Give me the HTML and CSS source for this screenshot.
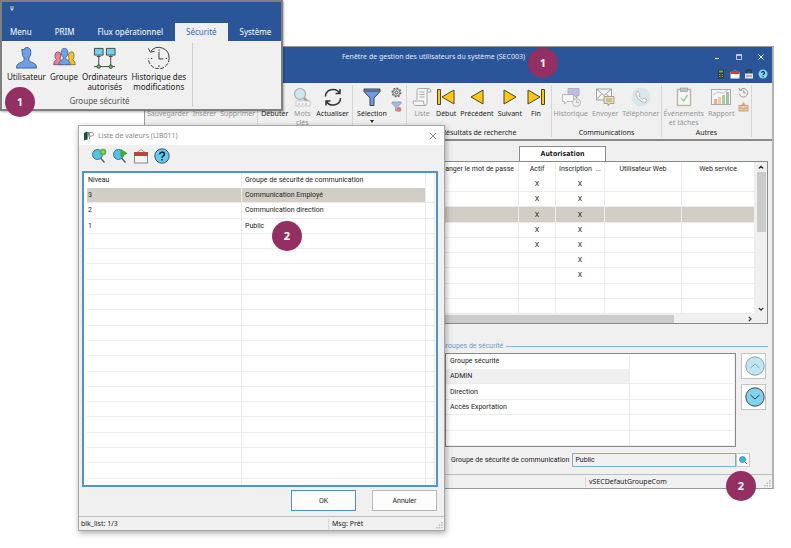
FILE: index.html
```html
<!DOCTYPE html>
<html lang="fr">
<head>
  <meta charset="UTF-8">
  <meta name="viewport" content="width=device-width, initial-scale=1.0">
  <title>Gestion des utilisateurs</title>
  <link rel="stylesheet" href="styles.css">
</head>
<body>
<div class="desktop">

  <!-- main window -->
  <section class="window main-window">
    <header class="main-title">
      <div class="title-row">
        <h1>Fenêtre de gestion des utilisateurs du système (SEC003)</h1>
        <button class="win-btn" aria-label="Réduire"><svg width="8" height="8" viewBox="0 0 8 8"><path d="M2 5.5h4" stroke="#fff"/></svg></button>
        <button class="win-btn" aria-label="Agrandir"><svg width="8" height="8" viewBox="0 0 8 8"><path d="M1.5 1.5h5v5h-5zM1.5 2.5h5" stroke="#dfe7f3" stroke-width=".8" fill="none"/></svg></button>
        <button class="win-btn" aria-label="Fermer"><svg width="8" height="8" viewBox="0 0 8 8"><path d="M1.5 1.5l5 5M6.500 1.500l-5 5" stroke="#fff"/></svg></button>
      </div>
      <div class="quick-row">
        <button class="quick" aria-label="Calculatrice"><svg width="10" height="10" viewBox="0 0 10 10"><rect x="2" y=".5" width="6" height="9" fill="#333b36"/><rect x="3" y="1.500" width="4" height="2" fill="#69b34c"/><path d="M3 5.500h4M3 7.500h4" stroke="#8b9690" stroke-dasharray="1 .5"/></svg></button>
        <button class="quick" aria-label="Calendrier"><svg width="10" height="10" viewBox="0 0 10 10"><path d="M2 3l3-2 3 2" stroke="#999" fill="none" stroke-width=".6"/><rect x=".5" y="3" width="9" height="6.500" fill="#fff"/><rect x=".5" y="2.500" width="9" height="2.500" fill="#c8453b"/></svg></button>
        <button class="quick" aria-label="Verrouiller"><svg width="10" height="10" viewBox="0 0 10 10"><path d="M2.500 5V3a2.500 2.200 0 0 1 5 0v2" stroke="#333" fill="none" stroke-width="1.200"/><rect x="1" y="4.500" width="8" height="5" fill="#e8e8e8"/><path d="M2 7h6" stroke="#777"/></svg></button>
        <button class="quick" aria-label="Aide"><svg width="10" height="10" viewBox="0 0 10 10"><circle cx="5" cy="5" r="4.500" fill="#7fd6f2"/><path d="M3.500 3.800a1.500 1.300 0 1 1 2.300 1.200q-.8.500-.8 1M5 7.200v1" stroke="#123" stroke-width="1.200" fill="none"/></svg></button>
      </div>
    </header>

    <div class="ribbon">
      <div class="group group-edit">
        <div class="tools">
          <button class="tool" disabled><span class="icon"></span>Sauvegarder</button>
          <button class="tool" disabled><span class="icon"></span>Insérer</button>
          <button class="tool" disabled><span class="icon"></span>Supprimer</button>
        </div>
      </div>
      <div class="group group-query">
        <div class="tools">
          <button class="tool"><span class="icon"></span>Débuter</button>
          <button class="tool" disabled>
            <svg class="icon" viewBox="0 0 20 20"><circle cx="8" cy="7" r="5.500" fill="#a6e0f2" stroke="#555" stroke-width="1.200"/><path d="M12 11l4 4" stroke="#444" stroke-width="2.500"/><rect x="4" y="14" width="14" height="5" fill="#fff" stroke="#777" stroke-width=".7"/><path d="M6 17h2M9.500 17h2M13 17h2" stroke="#555"/></svg>
            Mots<br>clés</button>
          <button class="tool">
            <svg class="icon" viewBox="0 0 20 20" fill="none" stroke="#333" stroke-width="1.500"><path d="M2.500 9.500a7.500 7 0 0 1 14-3.500M17.500 11a7.500 7 0 0 1-14 3.500M17 2v4.500h-4.500M3 18.500V14h4.500"/></svg>
            Actualiser</button>
        </div>
      </div>
      <div class="group group-select">
        <div class="tools">
          <button class="tool">
            <svg class="icon" viewBox="0 0 20 20"><path d="M2 2h16v2.500l-6 6.500v7.500h-4V11L2 4.500z" fill="#6b9be8" stroke="#444"/><path d="M2 4h16" stroke="#444"/></svg>
            Sélection<svg class="arrow" width="4" height="3" viewBox="0 0 4 3"><path d="M0 0h4L2 3z" fill="#222"/></svg></button>
          <div class="mini">
            <button class="quick" aria-label="Options"><svg width="11" height="11" viewBox="0 0 11 11" fill="none"><circle cx="5.500" cy="5.500" r="4.300" stroke="#666" stroke-width="1.400" stroke-dasharray="1.900 1.400"/><circle cx="5.500" cy="5.500" r="3.400" fill="#d9e0e6" stroke="#666" stroke-width=".8"/><circle cx="5.500" cy="5.500" r="1.400" fill="#fff" stroke="#555"/></svg></button>
            <button class="quick faded" aria-label="Retirer le filtre"><svg width="11" height="11" viewBox="0 0 11 11"><path d="M1 1h9v1.500L6.500 6v4h-2V6L1 2.500z" fill="#6b9be8" stroke="#555" stroke-width=".8"/><circle cx="8" cy="8.500" r="2.400" fill="#d6362b"/></svg></button>
          </div>
        </div>
      </div>
      <div class="group group-results">
        <div class="tools">
          <button class="tool" disabled>
            <svg class="icon" viewBox="0 0 20 20" fill="#fff" stroke="#555"><path d="M5 13V3.500Q5 1.500 7 1.500h10.500Q19 2 19 5h-4v11q0 2.500-2 2.500H3Q1 18 1 14h10.500q0 4 1.500 4.500"/><path d="M15 5q0-3.500 2-3.500M7.500 5h5M7.500 7.500h5M7.500 10h5" fill="none"/></svg>
            Liste</button>
          <button class="tool">
            <svg class="icon" viewBox="0 0 20 20" fill="#ffc90e" stroke="#4a4434"><path d="M1.500 2.500h3v15h-3zM18 3v14L6 10z"/></svg>
            Début</button>
          <button class="tool">
            <svg class="icon" viewBox="0 0 20 20" fill="#ffc90e" stroke="#4a4434"><path d="M16 3v14L4 10z"/></svg>
            Précédent</button>
          <button class="tool">
            <svg class="icon" viewBox="0 0 20 20" fill="#ffc90e" stroke="#4a4434"><path d="M4 3v14l12-7z"/></svg>
            Suivant</button>
          <button class="tool">
            <svg class="icon" viewBox="0 0 20 20" fill="#ffc90e" stroke="#4a4434"><path d="M15.500 2.500h3v15h-3zM2 3v14l12-7z"/></svg>
            Fin</button>
        </div>
        <h2>Résultats de recherche</h2>
      </div>
      <div class="group group-comm">
        <div class="tools">
          <button class="tool" disabled>
            <svg class="icon" viewBox="0 0 20 20" stroke="#555" stroke-width=".8"><path d="M7 1.500h11v7h-2v2.500l-3-2.500H7z" fill="#8b7bea"/><path d="M1.500 7.500h11v7H6L3.500 17v-2.500h-2z" fill="#fff"/><circle cx="15.500" cy="15.500" r="4" fill="#eee"/><path d="M15.500 13v2.500h2.500" fill="none"/></svg>
            Historique</button>
          <button class="tool" disabled>
            <svg class="icon" viewBox="0 0 20 20" stroke="#333" stroke-width=".9"><path d="M1.500 2h15v11h-15zl7.500 6.500L16.500 2M1.500 13l5-6M16.500 13l-5-6" fill="#fff"/><path d="M9 9.500h10v7h-4L13 19v-2.500H9z" fill="#ffc63d"/><path d="M11 12h6M11 14h6"/></svg>
            Envoyer</button>
          <button class="tool" disabled>
            <svg class="icon" viewBox="0 0 20 20"><circle cx="10" cy="10" r="9.500" fill="#c3dbe6"/><path d="M5 5.500l2-1.500 2 3-1 1.500q1 2.500 3.500 3.700L13 11l3 2-1.500 2.500Q11 16 7.500 12T5 5.500z" fill="#fff" stroke="#555" stroke-width=".8"/></svg>
            Téléphoner</button>
        </div>
        <h2>Communications</h2>
      </div>
      <div class="group group-other">
        <div class="tools">
          <button class="tool" disabled>
            <svg class="icon" viewBox="0 0 20 20"><rect x="3.500" y="2.500" width="13" height="16" fill="#fff" stroke="#8a6a4a" stroke-width="1.400"/><rect x="6.500" y="1" width="7" height="3.500" fill="#888" stroke="#444" stroke-width=".7"/><path d="M7 11l2.500 3L13.500 8" stroke="#3fa535" stroke-width="1.400" fill="none"/></svg>
            Événements<br>et tâches</button>
          <button class="tool" disabled>
            <svg class="icon" viewBox="0 0 20 20"><rect x=".5" y="2.500" width="19" height="15" fill="#fff" stroke="#555"/><path d="M3 17v-5h3v5z" fill="#e2574c"/><path d="M7 17v-7h3v7z" fill="#f0a030"/><path d="M11 17V8h3v9z" fill="#58a848"/><path d="M15 17V5h3v12z" fill="#3c8a3c"/><path d="M2 8l5-3 5 1 5-3" stroke="#777" stroke-width=".8" fill="none"/></svg>
            Rapport</button>
          <div class="mini faded">
            <button class="quick" aria-label="Historique" disabled><svg width="11" height="11" viewBox="0 0 11 11" fill="none" stroke="#555" stroke-width=".9"><path d="M1.800 3.500A4.300 4.300 0 1 1 1.300 7M1 1l.8 2.500 2.500-.4M5.800 3v3h2"/></svg></button>
            <button class="quick" aria-label="Documents" disabled><svg width="11" height="11" viewBox="0 0 11 11"><path d="M3 4.500L5.500 1 8 4.500z" fill="#d9653b"/><rect x="1" y="4.500" width="9" height="5.500" fill="#f3b562" stroke="#9a5b2c" stroke-width=".8"/><path d="M1 7h3l.5 1h2L7 7h3" stroke="#9a5b2c" fill="none" stroke-width=".8"/></svg></button>
          </div>
        </div>
        <h2>Autres</h2>
      </div>
    </div>

    <div class="main-body">
      <div class="auth-tab">Autorisation</div>
      <div class="user-grid">
        <table class="grid users">
          <colgroup><col><col class="c-actif"><col class="c-insc"><col class="c-web"><col class="c-serv"></colgroup>
          <thead>
            <tr><th>Changer le mot de passe</th><th>Actif</th><th>Inscription &nbsp;...</th><th>Utilisateur Web</th><th>Web service</th></tr>
          </thead>
          <tbody>
            <tr><td></td><td>X</td><td>X</td><td></td><td></td></tr>
            <tr><td></td><td>X</td><td>X</td><td></td><td></td></tr>
            <tr class="selected"><td></td><td>X</td><td>X</td><td></td><td></td></tr>
            <tr><td></td><td>X</td><td>X</td><td></td><td></td></tr>
            <tr><td></td><td>X</td><td>X</td><td></td><td></td></tr>
            <tr><td></td><td></td><td>X</td><td></td><td></td></tr>
            <tr><td></td><td></td><td>X</td><td></td><td></td></tr>
            <tr><td></td><td></td><td></td><td></td><td></td></tr>
            <tr><td></td><td></td><td></td><td></td><td></td></tr>
          </tbody>
        </table>
        <div class="vscroll">
          <svg width="6" height="10" viewBox="0 0 6 10"><path d="M.8 6.500L3 4.300l2.200 2.200" stroke="#333" stroke-width="1.200" fill="none"/></svg>
          <span class="vthumb"></span>
          <svg width="6" height="10" viewBox="0 0 6 10"><path d="M.8 4L3 6.200 5.200 4" stroke="#333" stroke-width="1.200" fill="none"/></svg>
        </div>
        <div class="hscroll">
          <span class="hthumb"></span>
          <svg width="6" height="6" viewBox="0 0 6 6"><path d="M1.800.8L4 3 1.800 5.200" stroke="#333" stroke-width="1.200" fill="none"/></svg>
        </div>
      </div>

      <div class="security">
        <h3>Groupes de sécurité</h3>
        <div class="security-row">
          <table class="grid groups">
            <colgroup><col><col class="c-extra"></colgroup>
            <thead><tr><th>Groupe sécurité</th><th></th></tr></thead>
            <tbody>
              <tr class="current"><td>ADMIN</td><td></td></tr>
              <tr><td>Direction</td><td></td></tr>
              <tr><td>Accès Exportation</td><td></td></tr>
              <tr><td></td><td></td></tr>
              <tr><td></td><td></td></tr>
            </tbody>
          </table>
          <div class="movers">
            <button class="mover" aria-label="Monter" disabled><svg width="20" height="20" viewBox="0 0 20 20"><circle cx="10" cy="10" r="9.200" fill="#7fd3ee" stroke="#333"/><path d="M5.500 12L10 8l4.500 4" stroke="#333" fill="none"/></svg></button>
            <button class="mover" aria-label="Descendre"><svg width="20" height="20" viewBox="0 0 20 20"><circle cx="10" cy="10" r="9.200" fill="#7fd3ee" stroke="#444"/><path d="M5.500 8l4.500 4 4.500-4" stroke="#333" fill="none"/></svg></button>
          </div>
        </div>
        <div class="com-field">
          <label for="groupe_com">Groupe de sécurité de communication</label>
          <input type="text" id="groupe_com" value="Public">
          <button class="lookup" aria-label="Rechercher"><svg width="10" height="10" viewBox="0 0 10 10"><path d="M6.500 6.500L9 9" stroke="#666"/><circle cx="4.500" cy="4.500" r="3" fill="#3fb4e0" stroke="#2d7fa5" stroke-width=".7"/></svg></button>
        </div>
      </div>
    </div>

    <footer class="status">
      <span class="main-msg">vSECDefautGroupeCom</span>
      <svg class="grip" width="7" height="7" viewBox="0 0 7 7"><path d="M5 0h1.500v1.500H5zM5 2.500h1.500V4H5zM5 5h1.500v1.500H5zM2.500 2.500H4V4H2.500zM2.500 5H4v1.500H2.500zM0 5h1.500v1.500H0z" fill="#bbb"/></svg>
    </footer>
  </section>

  <!-- security ribbon -->
  <section class="window ribbon-window">
    <header class="ribbon-head">
      <svg width="6" height="6" viewBox="0 0 6 6"><path d="M1 1h4" stroke="#dfe7f3" stroke-width=".8"/><path d="M1 2.500h4L3 5z" fill="#dfe7f3"/></svg>
      <nav class="tabs">
        <a href="#">Menu</a>
        <a href="#">PRIM</a>
        <a href="#">Flux opérationnel</a>
        <a href="#" class="active">Sécurité</a>
        <a href="#">Système</a>
      </nav>
    </header>
    <div class="security-group">
      <div class="big-tools">
        <button class="tool">
          <svg class="icon" viewBox="0 0 22 24"><path d="M11 1.500Q15.500 1.500 15.500 6.500 15.800 10 13.500 12.500V15Q14 16 19.500 18.500 21.500 20 21.500 23H.5Q.5 20 2.500 18.500 8 16 8.500 15v-2.500Q6.200 10 6.500 6.500L6 3.500 8.500 4Q9 1.500 11 1.500z" fill="#6f9fe6" stroke="#3f5f92"/></svg>
          Utilisateur</button>
        <button class="tool">
          <svg class="icon" viewBox="0 0 24 24"><path d="M5 6q3 0 3 3.500T7 14q4 1 4 5.500H.7Q.7 15.500 3.500 14.500 2 12 2 9.500T5 6z" fill="#ef7f95" stroke="#7a3c49" stroke-width=".8"/><path d="M19 6q3 0 3 3.500t-1.500 5q2.800 1 2.800 5H13q0-4.500 4-5.500-1-2-1-4.500T19 6z" fill="#f6bf2e" stroke="#7d6320" stroke-width=".8"/><path d="M12 2.500q3.500 0 3.500 4.500 0 3-2 5v2q4.500 1.200 4.500 5.500H6q0-4.300 4.500-5.500v-2q-2-2-2-5Q8.500 2.500 12 2.500z" fill="#6f9fe6" stroke="#3f5f92" stroke-width=".8"/></svg>
          Groupe</button>
        <button class="tool">
          <svg class="icon" viewBox="0 0 24 24" stroke="#444"><path d="M6 10v11M18.500 10v11M1 21.500h22" fill="none"/><path d="M1.500 2.500h9v7h-9zM14 2.500h9v7h-9z" fill="#6fd0f0"/><path d="M4 11h4M16.500 11h4" fill="none"/><circle cx="6" cy="21.500" r="1.800" fill="#6cbf3f"/><circle cx="18.500" cy="21.500" r="1.800" fill="#6cbf3f"/></svg>
          Ordinateurs<br>autorisés</button>
        <button class="tool">
          <svg class="icon" viewBox="0 0 24 24" stroke="#333" fill="none"><path d="M4 5.500A10.700 10.700 0 0 1 23 13"/><path d="M23 13A10.700 10.700 0 0 1 1.500 13" stroke-dasharray="4 1.500"/><path d="M1.500 2.500l2 4 4.500-1M12.500 6v7.500H17M12.500 3.500V5M12.500 20v2M4 13h1.500M19.500 13H21"/></svg>
          Historique des<br>modifications</button>
      </div>
      <h2>Groupe sécurité</h2>
    </div>
  </section>

  <!-- list of values -->
  <section class="window dialog">
    <header class="dialog-title">
      <svg width="10" height="10" viewBox="0 0 10 10"><path d="M0 2l3-1.500v8L0 9.500z" fill="#24483e"/><path d="M3 1h2.500L3.500 9H3z" fill="#5d8f7c"/><path d="M5.500 8V1.500h2q2 0 2 1.800t-2 1.800h-2" stroke="#8a949b" fill="none"/></svg>
      <h1>Liste de valeurs (LIB011)</h1>
      <button class="win-btn" aria-label="Fermer"><svg width="8" height="8" viewBox="0 0 8 8"><path d="M1 1l6 6M7 1L1 7" stroke="#888" stroke-width=".9"/></svg></button>
    </header>
    <div class="dialog-tools">
      <button class="quick" aria-label="Ajouter un critère"><svg width="16" height="16" viewBox="0 0 16 16"><path d="M9.500 10l4 4.500" stroke="#555" stroke-width="1.200"/><circle cx="6.500" cy="6.500" r="5" fill="#4fc3ea" stroke="#3d7288"/><circle cx="12" cy="4" r="3.300" fill="#5cb531"/><path d="M10.500 4h3M12 2.500v3" stroke="#b4e59a" stroke-width=".8"/></svg></button>
      <button class="quick" aria-label="Lancer la recherche"><svg width="16" height="16" viewBox="0 0 16 16"><path d="M9.500 10l4 4.500" stroke="#555" stroke-width="1.200"/><circle cx="6.500" cy="6.500" r="5" fill="#4fc3ea" stroke="#3d7288"/><path d="M9 1.500v7.500l6-3.700z" fill="#4fae25" stroke="#3f8420" stroke-width=".6"/></svg></button>
      <button class="quick" aria-label="Calendrier"><svg width="16" height="16" viewBox="0 0 16 16"><path d="M4 4.500L8 1.500l4 3" stroke="#777" fill="none" stroke-width=".8"/><rect x="1.500" y="4.500" width="13" height="10.500" fill="#f4f4f4" stroke="#8a8a8a"/><rect x="1" y="4" width="14" height="4" fill="#b5483f"/></svg></button>
      <button class="quick" aria-label="Aide"><svg width="16" height="16" viewBox="0 0 16 16"><circle cx="8" cy="8" r="7.200" fill="#5fcdf0" stroke="#3c5560"/><path d="M5.800 6.300a2.300 2 0 1 1 3.500 1.600Q8 8.700 8 9.800M8 11v1.600" stroke="#123" stroke-width="1.600" fill="none"/></svg></button>
    </div>
    <div class="values">
      <table class="grid levels">
        <colgroup><col class="c-level"><col><col class="c-gutter"></colgroup>
        <thead><tr><th>Niveau</th><th>Groupe de sécurité de communication</th><th></th></tr></thead>
        <tbody>
          <tr class="selected"><td>3</td><td>Communication Employé</td><td></td></tr>
          <tr><td>2</td><td>Communication direction</td><td></td></tr>
          <tr><td>1</td><td>Public</td><td></td></tr>
          <tr><td></td><td></td><td></td></tr>
          <tr><td></td><td></td><td></td></tr>
          <tr><td></td><td></td><td></td></tr>
          <tr><td></td><td></td><td></td></tr>
          <tr><td></td><td></td><td></td></tr>
          <tr><td></td><td></td><td></td></tr>
          <tr><td></td><td></td><td></td></tr>
          <tr><td></td><td></td><td></td></tr>
          <tr><td></td><td></td><td></td></tr>
          <tr><td></td><td></td><td></td></tr>
          <tr><td></td><td></td><td></td></tr>
          <tr><td></td><td></td><td></td></tr>
          <tr><td></td><td></td><td></td></tr>
          <tr><td></td><td></td><td></td></tr>
          <tr><td></td><td></td><td></td></tr>
          <tr><td></td><td></td><td></td></tr>
          <tr class="cut"><td></td><td></td><td></td></tr>
        </tbody>
      </table>
    </div>
    <div class="actions">
      <button class="action default">OK</button>
      <button class="action">Annuler</button>
    </div>
    <footer class="status">
      <span class="block-info">blk_list: 1/3</span>
      <span class="block-msg">Msg: Prêt</span>
      <svg class="grip" width="7" height="7" viewBox="0 0 7 7"><path d="M5 0h1.500v1.500H5zM5 2.500h1.500V4H5zM5 5h1.500v1.500H5zM2.500 2.500H4V4H2.500zM2.500 5H4v1.500H2.500zM0 5h1.500v1.500H0z" fill="#bbb"/></svg>
    </footer>
  </section>

  <span class="badge badge-menu">1</span>
  <span class="badge badge-title">1</span>
  <span class="badge badge-list">2</span>
  <span class="badge badge-field">2</span>
</div>
</body>
</html>
```
FILE: styles.css
```css
* {
  box-sizing: border-box;
}
body {
  margin: 0;
  background: #fff;
  color: #222;
  font-family: Roboto, sans-serif;
  font-size: 7px;
  line-height: 10px;
}
h1, h2, h3 {
  margin: 0;
  font-size: inherit;
  font-weight: normal;
}
button {
  border: 0;
  padding: 0;
  background: none;
  color: inherit;
  font: inherit;
}
svg {
  display: block;
  flex: none;
}
.desktop {
  position: relative;
  min-height: 100vh;
  overflow: hidden;
}
.window {
  position: absolute;
  display: flex;
  flex-direction: column;
  background: #f0f0f0;
}

/* main window */
.main-window {
  top: 46px;
  left: 144px;
  right: 17px;
  height: 443px;
  border: 1px solid #9a9a9a;
  border-right: 2px solid #b4b4b4;
}
.main-title {
  height: 36px;
  flex: none;
  background: #2a5699;
  color: #e3eaf5;
}
.title-row {
  display: flex;
  align-items: center;
  height: 20px;
}
.title-row h1 {
  flex: 1;
  padding-left: 16px;
  text-align: center;
  font-family: "Noto Sans", sans-serif;
}
.win-btn {
  display: flex;
  justify-content: center;
  width: 22px;
}
.quick-row {
  display: flex;
  justify-content: flex-end;
  gap: 4px;
  padding: 2px 4px 0 0;
}
.quick {
  display: block;
}
.ribbon {
  display: flex;
  height: 58px;
  flex: none;
  padding: 2px 0 2px;
  border-bottom: 2px solid #8a8a8a;
  font-family: "Noto Sans", sans-serif;
  line-height: 9px;
}
.group {
  display: flex;
  flex-direction: column;
  justify-content: space-between;
  border-right: 1px solid #d6d6d6;
  text-align: center;
}
.group-edit {
  width: 113px;
}
.group-query {
  width: 95px;
}
.group-select {
  width: 54px;
}
.group-results {
  width: 145px;
}
.group-comm {
  width: 110px;
}
.group-other {
  width: 90px;
}
.tools {
  display: flex;
  justify-content: center;
  align-items: flex-start;
  gap: 4px;
  padding-top: 2px;
}
.tool {
  min-width: 20px;
  white-space: nowrap;
}
.tool .icon {
  display: block;
  width: 20px;
  height: 20px;
  margin: 0 auto 2px;
}
.tool:disabled {
  color: #222;
  opacity: 0.45;
}
.arrow {
  margin: 2px auto 0;
}
.mini {
  display: flex;
  flex-direction: column;
  gap: 3px;
}
.faded {
  opacity: 0.6;
}

.main-body {
  flex: 1;
  padding: 5px 4px 0 0;
}
.auth-tab {
  width: 87px;
  height: 15px;
  margin-left: 374px;
  border: 1px solid #8a8a8a;
  border-bottom: 0;
  background: #fff;
  font-family: "DejaVu Sans Condensed", sans-serif;
  font-weight: bold;
  line-height: 14px;
  text-align: center;
}
.user-grid {
  display: grid;
  grid-template-columns: 1fr 12px;
  border: 1px solid #8a8a8a;
  background: #f0f0f0;
}
.grid {
  width: 100%;
  border-collapse: separate;
  border-spacing: 0;
  table-layout: fixed;
  background: #fff;
}
.grid th,
.grid td {
  height: 15px;
  padding: 0;
  border-right: 1px solid #ececec;
  border-bottom: 1px solid #ececec;
  font-weight: normal;
  line-height: 12px;
  text-align: left;
  white-space: nowrap;
}
.grid th {
  border-bottom-color: #fff;
}
.grid .selected td {
  background: #d3cec5;
}
.users {
  height: 152px;
}
.users th,
.users td {
  text-align: center;
}
.users th:first-child {
  padding-right: 4px;
  text-align: right;
}
.c-actif {
  width: 37px;
}
.c-insc {
  width: 49px;
}
.c-web {
  width: 77px;
}
.c-serv {
  width: 73px;
}
.vscroll {
  display: flex;
  flex-direction: column;
  align-items: center;
}
.vthumb {
  width: 9px;
  height: 60px;
  margin-bottom: auto;
  background: #cbcbcb;
}
.hscroll {
  display: flex;
  grid-column: 1 / 3;
  align-items: center;
  justify-content: space-between;
  height: 9px;
  padding-right: 14px;
}
.hthumb {
  width: 87%;
  height: 8px;
  background: #cbcbcb;
}

.security {
  margin: 17px 0 0 296px;
}
.security h3 {
  display: flex;
  align-items: center;
  gap: 3px;
  color: #7299c6;
}
.security h3::after {
  content: "";
  flex: 1;
  height: 1px;
  background: #8fb2d8;
}
.security-row {
  display: flex;
  gap: 5px;
  padding: 2px 2px 0 4px;
}
.groups {
  flex: 1;
  height: 94px;
  border: 1px solid #8a8a8a;
}
.groups th,
.groups td {
  padding-left: 4px;
}
.c-extra {
  width: 105px;
}
.groups .current td:first-child {
  background: #f0f0f0;
}
.movers {
  display: flex;
  flex-direction: column;
  gap: 5px;
}
.mover {
  display: flex;
  align-items: center;
  justify-content: flex-end;
  width: 25px;
  height: 26px;
  border: 1px solid #c4c4c4;
  background: #fff;
}
.mover:disabled svg {
  opacity: 0.5;
}
.com-field {
  display: flex;
  align-items: center;
  padding: 6px 18px 0 10px;
}
.com-field input {
  flex: 1;
  min-width: 0;
  height: 14px;
  margin-left: 3px;
  padding: 0 2px;
  border: 1px solid #7fb0c8;
  background: #f0f0f0;
  color: inherit;
  font: inherit;
}
.lookup {
  padding: 1px;
  border: 1px solid #c8c8c8;
  background: #fff;
}
.status {
  display: flex;
  align-items: center;
  flex: none;
  height: 14px;
  border-top: 1px solid #bdbdbd;
  font-family: "Noto Sans", sans-serif;
  font-size: 7px;
}
.grip {
  margin: auto 1px 1px auto;
}
.main-msg {
  margin-left: 440px;
  padding-left: 3px;
  border-left: 1px solid #d8d8d8;
}

/* security ribbon */
.ribbon-window {
  top: 0;
  left: 0;
  width: 283px;
  height: 111px;
  border: 2px solid #7f7f7f;
  font-family: "Noto Sans", sans-serif;
  font-size: 8px;
  box-shadow: 1px 1px 2px rgba(0, 0, 0, 0.3);
}
.ribbon-head {
  display: flex;
  flex-direction: column;
  justify-content: space-between;
  height: 39px;
  background: #2a5699;
}
.ribbon-head > svg {
  margin: 4px 0 0 7px;
}
.tabs {
  display: flex;
  gap: 1px;
}
.tabs a {
  padding: 0 11px;
  color: #fff;
  line-height: 18px;
  text-decoration: none;
  white-space: nowrap;
}
.tabs a:first-child {
  padding-left: 8px;
}
.tabs .active {
  background: #f0f0f0;
  color: #2a6ab0;
}
.security-group {
  flex: 1;
  width: 191px;
  margin: 2px 0;
  padding: 3px 0 0 5px;
  border-right: 1px solid #d0d0d0;
  text-align: center;
}
.big-tools {
  display: flex;
  align-items: flex-start;
  gap: 4px;
}
.big-tools .icon {
  width: 23px;
  height: 23px;
  margin-bottom: 3px;
}
.security-group h2 {
  margin-top: 4px;
  color: #555;
}

/* list of values */
.dialog {
  top: 125px;
  left: 78px;
  width: 367px;
  height: 406px;
  border: 1px solid #a8a8a8;
  box-shadow: 1px 2px 6px rgba(0, 0, 0, 0.35);
}
.dialog-title {
  display: flex;
  align-items: center;
  gap: 4px;
  height: 19px;
  padding-left: 5px;
  background: #fff;
  color: #888;
}
.dialog-title h1 {
  flex: 1;
  font-family: "Noto Sans", sans-serif;
}
.dialog-tools {
  display: flex;
  gap: 5px;
  padding: 3px 0 7px 12px;
}
.values {
  margin: 0 6px 0 3px;
  padding: 0 1px 0 3px;
  border: 2px solid #4f94cd;
  background: #fff;
}
.levels {
  height: 312px;
}
.levels th,
.levels td {
  padding-left: 3px;
}
.levels td:first-child,
.levels th:first-child {
  padding-left: 1px;
}
.c-level {
  width: 155px;
}
.c-gutter {
  width: 9px;
}
.levels .selected td:last-child {
  background: #fff;
}
.levels .cut td {
  height: 6px;
  border-bottom: 0;
}
.actions {
  display: flex;
  justify-content: flex-end;
  gap: 16px;
  padding: 3px 7px 0 0;
}
.action {
  width: 65px;
  height: 21px;
  border: 1px solid #b8b8b8;
  background: #fdfdfd;
}
.action.default {
  border-color: #4f8fc0;
}
.dialog .status {
  margin-top: auto;
}
.block-info {
  width: 250px;
  padding-left: 2px;
  border-right: 1px solid #d8d8d8;
}
.block-msg {
  padding-left: 3px;
}

/* step markers */
.badge {
  position: absolute;
  width: 30px;
  height: 30px;
  border-radius: 50%;
  background: #932f63;
  color: #fff;
  font-family: "Noto Sans", sans-serif;
  font-size: 11px;
  font-weight: bold;
  line-height: 30px;
  text-align: center;
}
.badge-menu {
  top: 87px;
  left: 5px;
}
.badge-title {
  top: 48px;
  left: 528px;
}
.badge-list {
  top: 221px;
  left: 272px;
}
.badge-field {
  top: 471px;
  left: 726px;
}
```
